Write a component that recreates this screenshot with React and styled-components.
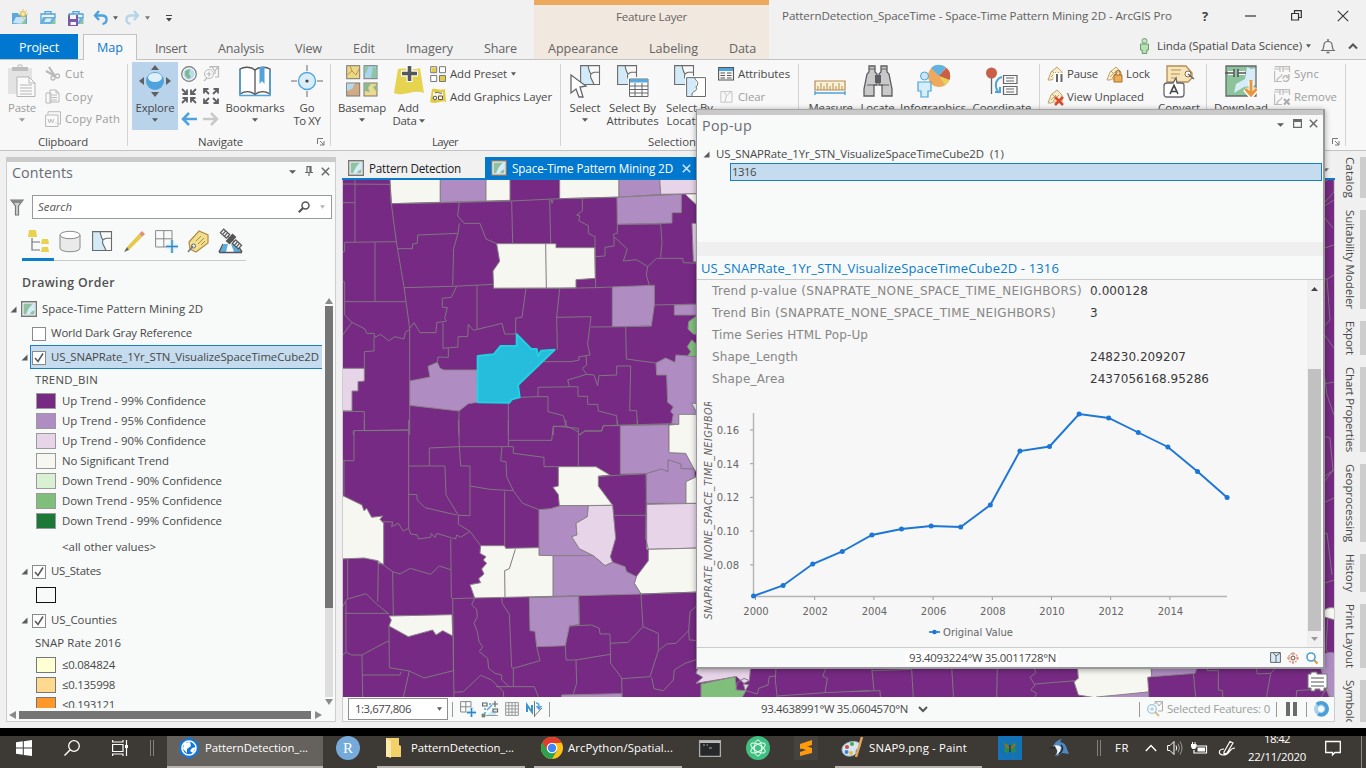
import React, { useLayoutEffect, useRef } from "react";
import styled, { createGlobalStyle, css } from "styled-components";

const UI = '"Open Sans", "Noto Sans", "Liberation Sans", sans-serif';
const WEB = '"DejaVu Sans", "Liberation Sans", sans-serif';

const Global = createGlobalStyle`
  * { box-sizing: border-box; }
  body { margin: 0; background: #f0f0f0; font: 11.4px/14px ${UI}; color: #484848; overflow: hidden; }
  svg { display: block; flex: none; overflow: visible; }
`;

/* ---------- text that is tracked to a given run length ---------- */
const Run = styled.span`
  display: block;
  flex: none;
  white-space: nowrap;
  width: max-content;
  ${(p) => p.$size && `font-size: ${p.$size}px;`}
  ${(p) => p.$color && `color: ${p.$color};`}
  ${(p) => p.$weight && `font-weight: ${p.$weight};`}
  ${(p) => p.$italic && "font-style: italic;"}
  ${(p) => p.$web && `font-family: ${WEB};`}
  margin-left: ${(p) => p.$ml || 0}px;
  ${(p) => p.$vertical && css`
    writing-mode: vertical-rl;
    width: auto;
    height: max-content;
  `}
`;

function Text({ w, ml, size, color, weight, italic, web, vertical, children }) {
  const ref = useRef(null);
  useLayoutEffect(() => {
    const el = ref.current;
    if (!w || !el) return;
    el.style.letterSpacing = "0px";
    const box = el.getBoundingClientRect();
    const natural = vertical ? box.height : box.width;
    el.style.letterSpacing = `${(w - natural) / el.textContent.length}px`;
  }, [w, vertical]);
  return (
    <Run ref={ref} $ml={ml} $size={size} $color={color} $weight={weight} $italic={italic} $web={web} $vertical={vertical}>
      {children}
    </Run>
  );
}

/* ---------- drawing helpers ---------- */
const Svg = styled.svg.attrs({ fill: "none" })`
  margin-left: ${(p) => p.$ml || 0}px;
  margin-top: ${(p) => p.$mt || 0}px;
`;
const I = ({ s = 16, w, h, ml, mt, children }) => (
  <Svg width={w || s} height={h || s} viewBox={`0 0 ${w || s} ${h || s}`} $ml={ml} $mt={mt}>
    {children}
  </Svg>
);
const G = "#6a6a6a";
const L = "#b9b9b9";
const B = "#4fa3dc";
const Caret = ({ ml, mt, color = "#5a5a5a", w = 6 }) => (
  <I w={w} h={4} ml={ml} mt={mt}><path d={`M0 .3H${w}L${w / 2} 3.7Z`} fill={color} /></I>
);
const Cross = ({ ml, mt, color = G, s = 9, sw = 1.5 }) => (
  <I s={s} ml={ml} mt={mt}><path d={`M.8.8L${s - 0.8} ${s - 0.8}M${s - 0.8}.8L.8 ${s - 0.8}`} stroke={color} strokeWidth={sw} /></I>
);

/* ---------- page frame ---------- */
const Screen = styled.div`
  position: relative;
  width: 1366px;
  height: 768px;
  overflow: hidden;
  display: flex;
  flex-direction: column;
  background: #f0f0f0;
`;
const Row = styled.div`
  display: flex;
  align-items: center;
  height: ${(p) => (p.$h ? `${p.$h}px` : "auto")};
  padding-left: ${(p) => p.$pl || 0}px;
  padding-bottom: ${(p) => p.$pb || 0}px;
  margin-top: ${(p) => p.$mt || 0}px;
  flex: none;
`;

/* ---------- header ---------- */
const Header = styled.header`
  display: flex;
  height: 60px;
  flex: none;
  background: #f1f1f1;
  border-bottom: 1px solid #c2c2c2;
`;
const HeaderPart = styled.div`
  width: ${(p) => p.$w}px;
  flex: none;
`;
const ContextPart = styled(HeaderPart)`
  background: #f1e8df;
  border-top: 5px solid #efa95c;
`;
const TabStrip = styled.nav`
  display: flex;
  align-items: center;
  height: 25px;
  > span { padding-top: 4px; }
`;
const ProjectTab = styled.div`
  width: 78px;
  height: 25px;
  padding: 7px 0 0 19px;
  background: #0078d0;
`;
const ActiveTab = styled.div`
  width: 54px;
  height: 26px;
  margin: 0 0 -1px 5px;
  padding: 6px 0 0 13px;
  background: #f8f8f8;
  border: 1px solid #c2c2c2;
  border-bottom: 0;
`;

const OpenFolder = () => (
  <>
    <path d="M5 4V1.700H11V4M1 14V4H15V8" stroke={B} strokeWidth="1.300" />
    <path d="M0 14L3 7H16L13 14Z" fill="#64b0e0" />
    <path d="M4 12L6 8.500H12L10 12Z" fill="#d9edf9" />
    <path d="M11 14L15.500 8V14Z" fill="#8cc6a0" />
  </>
);

function TopHeader() {
  const tabs = [["Insert", 18, 32], ["Analysis", 31, 46], ["View", 31, 27], ["Edit", 31, 22], ["Imagery", 31, 47], ["Share", 31, 33]];
  return (
    <Header>
      <HeaderPart $w={534}>
        <Row $h={34}>
          <I ml={12} mt={2}>
            <path d="M0 3H6L7 5H15V14H0Z" fill="#5ba9dd" />
            <path d="M1 13L4 7H14L12 14Z" fill="#c7e3f5" /><path d="M9 14L14 8V14Z" fill="#8cc6a0" />
            <circle cx="11" cy="4" r="2.500" fill="#f6e9a0" stroke="#d8b848" /><path d="M11-1V9M6 4H16M7.500.5L14.500 7.500M14.500.5L7.500 7.500" stroke="#d8b848" strokeDasharray="1.500 7" />
          </I>
          <I ml={12} mt={2}><OpenFolder /></I>
          <I ml={12} mt={2}>
            <OpenFolder /><path d="M0 5H10V16H0Z" fill="#7a5aa8" /><path d="M2 5H8V9H2Z" fill="#f4f4f4" /><path d="M2.500 12H8V15H2.500Z" fill="#f4f4f4" />
          </I>
          <I ml={9} mt={2}><path d="M6 1L2 5.500L6 10M2 5.500H9C15 5.500 15 13 9.500 14" stroke={B} strokeWidth="2.400" /></I>
          <Caret ml={4} w={5} mt={1} />
          <I ml={7} mt={2}><path d="M9 1L13 5.500L9 10M13 5.500H6C0 5.500 0 13 5.500 14" stroke="#b5d6ea" strokeWidth="2.400" /></I>
          <Caret ml={4} w={5} mt={1} color="#777" />
          <I w={6} h={7} ml={16} mt={2}><path d="M0 .5H6" stroke="#444" /><path d="M0 3H6L3 6.500Z" fill="#444" /></I>
        </Row>
        <TabStrip>
          <ProjectTab><Text w={40} size={12.6} color="#fff">Project</Text></ProjectTab>
          <ActiveTab><Text w={26} size={12.6} color="#0a78cc">Map</Text></ActiveTab>
          {tabs.map(([t, ml, w]) => <Text key={t} ml={ml} w={w} size={12.6} color="#646464">{t}</Text>)}
        </TabStrip>
      </HeaderPart>
      <ContextPart $w={235}>
        <Row $h={29} $pb={5}><Text ml={82} w={71} size={11.6} color="#6b6460">Feature Layer</Text></Row>
        <TabStrip>
          <Text ml={14} w={70} size={12.6} color="#646464">Appearance</Text>
          <Text ml={31} w={49} size={12.6} color="#646464">Labeling</Text>
          <Text ml={31} w={27} size={12.6} color="#646464">Data</Text>
        </TabStrip>
      </ContextPart>
      <HeaderPart $w={597}>
        <Row $h={31} $pl={13}>
          <Text w={390} size={11.6} color="#606060">PatternDetection_SpaceTime - Space-Time Pattern Mining 2D - ArcGIS Pro</Text>
          <Text ml={30} size={13} weight={700} color="#444">?</Text>
          <I w={11} h={2} ml={37}><path d="M0 1H11" stroke="#333" strokeWidth="1.200" /></I>
          <I s={11} ml={35}><path d="M.6 3.500H7.500V10H.6ZM3.500 3V.7H10.300V7.500H8" stroke="#333" strokeWidth="1.200" /></I>
          <Cross ml={35} s={12} color="#333" sw={1.1} />
        </Row>
        <Row $h={30} $pl={370}>
          <I w={11} h={16}><rect x="3" y=".7" width="5" height="4.500" rx="2" fill="#c9e6c6" stroke="#6a9c68" /><path d="M1.500 6H9.500V12H7.800V15.500H3.200V12H1.500Z" fill="#b8dfb5" stroke="#6a9c68" /></I>
          <Text ml={7} w={145} size={11.6}>Linda (Spatial Data Science)</Text>
          <Caret ml={4} w={5} />
          <I w={14} h={16} ml={10}><path d="M1 12.500C3 11 2.500 9 3 6.500C3.400 2.500 10.600 2.500 11 6.500C11.500 9 11 11 13 12.500Z" stroke="#6c6c6c" strokeWidth="1.200" /><path d="M7 3V1M5.500 14.500H8.500" stroke="#6c6c6c" strokeWidth="1.500" /></I>
          <I w={10} h={6} ml={13}><path d="M1 5.500L5 1.500L9 5.500" stroke="#555" strokeWidth="2" /></I>
        </Row>
      </HeaderPart>
    </Header>
  );
}

/* ---------- ribbon ---------- */
const Ribbon = styled.section`
  display: flex;
  height: 91px;
  flex: none;
  background: #f8f8f8;
  border-bottom: 1px solid #c2c2c2;
`;
const GroupBox = styled.div`
  position: relative;
  width: ${(p) => p.$w}px;
  flex: none;
  background: linear-gradient(#d4d4d4, #d4d4d4) right 4px / 1px 82px no-repeat;
`;
const GroupBody = styled.div`
  display: flex;
  align-items: flex-start;
  height: 74px;
`;
const GroupFoot = styled.div`
  display: flex;
  align-items: center;
  height: 15px;
`;
const BigBox = styled.button`
  display: flex;
  flex-direction: column;
  align-items: center;
  flex: none;
  width: ${(p) => p.$w}px;
  height: 68px;
  margin: 2px 0 0 ${(p) => p.$ml}px;
  padding: 3px 0 0;
  border: 0;
  color: ${(p) => (p.$dim ? "#9c9c9c" : "#484848")};
  font: 11.4px/13px ${UI};
  background: ${(p) => (p.$active ? "#b9d3ea" : "transparent")};
`;
const BigIcon = styled.span`
  height: 35px;
  margin-bottom: 1px;
`;
const SmallCol = styled.div`
  display: flex;
  flex-direction: column;
  flex: none;
  padding-top: ${(p) => (p.$pt === undefined ? 3 : p.$pt)}px;
  margin-left: ${(p) => p.$ml}px;
  width: ${(p) => p.$w}px;
`;
function Group({ w, body, label, lml, lw, launch }) {
  return (
    <GroupBox $w={w}>
      <GroupBody>{body}</GroupBody>
      <GroupFoot>
        {label && <Text ml={lml} w={lw}>{label}</Text>}
        {launch && <I s={8} ml={launch}><path d="M.5 6V.5H6M7 3V7H3M3 3L7 7" stroke="#777" /></I>}
      </GroupFoot>
    </GroupBox>
  );
}
function Big({ ml = 0, w, icon, a, aw, b, bw, arrow, active, dim }) {
  return (
    <BigBox $ml={ml} $w={w} $active={active} $dim={dim}>
      <BigIcon><I s={32}>{icon}</I></BigIcon>
      <Text w={aw}>{a}</Text>
      {b && (arrow ? <Row><Text w={bw}>{b}</Text><Caret ml={2} /></Row> : <Text w={bw}>{b}</Text>)}
      {!b && arrow && <Caret mt={4} color={dim ? "#9c9c9c" : undefined} />}
    </BigBox>
  );
}
const Small = ({ icon, t, w, arrow, dim }) => (
  <Row $h={22.5}>
    <I>{icon}</I>
    <Text ml={4} w={w} color={dim ? "#9c9c9c" : undefined}>{t}</Text>
    {arrow && <Caret ml={4} w={5} />}
  </Row>
);

const Counties = ({ c = G, f = "#d3eaf8" }) => (
  <>
    <path d="M.5.5H8C11 8 9 14 14 19.500H.5Z" fill={f} />
    <path d="M.6.6H19.500V19.500H.6ZM8 .5C9 5 9 7 11 9C9 12 12 14 14 19.500M19.500 7C14 7 14 7 11 9" stroke={c} strokeWidth="1.100" />
  </>
);
const MiniMap = ({ c = "#c4c4c4" }) => <path d="M1 .7H15V14H1ZM5 .7L8 6L14 1M8 6L6 14" stroke={c} strokeWidth="1.200" />;
const TagHouse = () => (
  <path d="M1 14L4 6L10 1L15 6V13H6L4 14ZM4 11L9 6M6 12L12 6M5 5L11 11" fill="#f8edc8" stroke="#b99a62" strokeWidth=".9" />
);

function RibbonBar() {
  return (
    <Ribbon>
      <Group w={128} label="Clipboard" lml={38} lw={50} body={<>
        <Big dim ml={4} w={36} a="Paste" aw={28} arrow icon={<>
          <path d="M2 3H26V29H2Z" fill="#e3e3e3" /><path d="M6 2H22V6H6Z" fill="#bdbdbd" /><path d="M12 2V0H16V2" stroke="#bdbdbd" />
          <path d="M11 12H23L29 18V31.500H11Z" fill="#fafafa" stroke="#b5b5b5" /><path d="M23 12V18H29M14 20H26M14 23H26M14 26H26M14 29H26" stroke="#b5b5b5" />
        </>} />
        <SmallCol $ml={5} $w={80}>
          <Small dim t="Cut" w={19} icon={<><path d="M4 1L10 10M1 5L10 10" stroke={L} strokeWidth="2.200" /><circle cx="8" cy="12" r="2" stroke={L} strokeWidth="1.300" /><circle cx="12.500" cy="10" r="2" stroke={L} strokeWidth="1.300" /></>} />
          <Small dim t="Copy" w={28} icon={<path d="M1 4H6V14H1ZM5 1H11L14 4V13H5ZM11 1V4H14M7 6H12M7 8.500H12M7 11H12" stroke={L} fill="#fafafa" />} />
          <Small dim t="Copy Path" w={55} icon={<><path d="M3 3V.7H15.500V13H13" stroke={L} /><path d="M.6 4H13V15.500H.6Z" fill="#fafafa" stroke={L} /><path d="M3 8L4.500 12L6 8L7.500 12L9 8M10.500 12H11.500" stroke={L} /></>} />
        </SmallCol>
      </>} />
      <Group w={203} label="Navigate" lml={70} lw={45} launch={74} body={<>
        <Big active ml={4} w={46} a="Explore" aw={39} arrow icon={<>
          <path d="M12 5L16 0L20 5ZM12 27L16 32L20 27ZM5 12L0 16L5 20ZM27 12L32 16L27 20Z" fill="#5f6064" />
          <circle cx="16" cy="16" r="9" fill="#4fa3dc" /><ellipse cx="16" cy="12.500" rx="7" ry="4.500" fill="#dff0fb" />
        </>} />
        <SmallCol $ml={3} $w={38} $pt={6}>
          <Row>
            <I s={16}><circle cx="8" cy="8" r="7.300" fill="#f3f8fb" stroke="#777" strokeWidth="1.200" /><circle cx="8" cy="8" r="5.500" fill="#b9dcef" /><path d="M4 5L9 3L8 8L10 11L7 13L4 9Z" fill="#7fb890" /></I>
            <I s={16} ml={6}><circle cx="6" cy="8" r="4.500" stroke={L} /><path d="M3.500 8H8.500M6 5.500V10.500M4 12L1 15M7 2V.6H15.500V11H12M9 1L12 5L15 1M12 5V8" stroke={L} strokeWidth="1.200" /></I>
          </Row>
          <Row $mt={6}>
            {["M1 1L6 6M6 1.500V6H1.500M15 1L10 6M10 1.500V6H14.500M1 15L6 10M1.500 10H6V14.500M15 15L10 10M14.500 10H10V14.500", "M1 1L6 6M1 5.500V1H5.500M15 1L10 6M10.500 1H15V5.500M1 15L6 10M1 10.500V15H5.500M15 15L10 10M15 10.500V15H10.500"].map((d, i) => (
              <I key={d} s={16} ml={i * 6}><path d={d} stroke="#5f6064" strokeWidth="1.800" /></I>
            ))}
          </Row>
          <Row $mt={7}>
            <I s={16}><path d="M16 8H2M8 2L2 8L8 14" stroke={B} strokeWidth="2.500" /></I>
            <I s={16} ml={6}><path d="M0 8H14M8 2L14 8L8 14" stroke="#c9c9c9" strokeWidth="2.500" /></I>
          </Row>
        </SmallCol>
        <Big ml={4} w={64} a="Bookmarks" aw={59} arrow icon={<>
          <path d="M1 29V4C5 1.500 12 1.500 16 5C20 1.500 27 1.500 31 4V29C26 26 20 26 16 29.500C12 26 6 26 1 29Z" fill="#fdfdfd" stroke="#55565a" strokeWidth="1.400" /><path d="M1 5V30.500H31V5" stroke={B} strokeWidth="1.500" />
          <path d="M16 5V29" stroke="#55565a" strokeWidth="1.300" /><path d="M20.500 2H25.500V19L23 16L20.500 19Z" fill={B} />
        </>} />
        <Big ml={2} w={36} a="Go" aw={15} b="To XY" bw={27} icon={<>
          <circle cx="16" cy="16" r="8.500" fill="#d9edfa" stroke={B} strokeWidth="1.300" /><path d="M16 6V0M16 32V26M6 16H0M32 16H26" stroke="#6a6a6a" /><circle cx="16" cy="16" r="1.600" fill="#444" />
        </>} />
      </>} />
      <Group w={230} label="Layer" lml={101} lw={26} body={<>
        <Big ml={3} w={56} a="Basemap" aw={48} arrow icon={<>
          <rect x=".7" y=".7" width="13" height="13" fill="#ead983" stroke="#777" /><path d="M1 10L6 6L10 10L13 4M4 1L6 6" stroke="#c98c50" /><rect x="18" y=".7" width="13" height="13" fill="#a9d5ee" stroke="#777" /><path d="M18.500 1H23L20 8L18.500 9ZM27 1L30.500 4V13H25Z" fill="#8fc7a5" />
          <rect x=".7" y="18" width="13" height="13" fill="#d1ab84" stroke="#777" /><path d="M1 18.500H9L6 24L1 26Z" fill="#b5d8ec" /><rect x="18" y="18" width="13" height="13" fill="#ecd98d" stroke="#777" /><path d="M18.500 18.500H25L22 23L24 27L19 26ZM27 22L30.500 20V27Z" fill="#82bd91" />
        </>} />
        <Big ml={2} w={33} a="Add" aw={21} b="Data" bw={24} arrow icon={<>
          <path d="M5 4C11 2 19 6 27 3L31 28C21 24 11 32 1 28Z" fill="#e6d34f" /><path d="M16.500 0V17M8 8.500H25" stroke="#fff" strokeWidth="6" /><path d="M16.500 1V16M9 8.500H24" stroke="#55565a" strokeWidth="3.600" />
        </>} />
        <SmallCol $ml={5} $w={124}>
          <Small t="Add Preset" w={57} arrow icon={<><path d="M.7.7H6.700V6.700H.7ZM9.500.7H15.500V6.700H9.500ZM.7 9.500H6.700V15.500H.7ZM9.500 9.500H15.500V15.500H9.500Z" fill="#fff" stroke="#777" /><path d="M1.500 1.500H6V6H1.500ZM10 10H15V15H10Z" fill="#e3cc45" /></>} />
          <Small t="Add Graphics Layer" w={102} icon={<g transform="translate(0 -1)"><path d="M2 1C6 0 10 3 15 1L16 14C10 12 6 17 0 14Z" fill="#e3cc45" /><path d="M3 4H13V12H3Z" fill="#fff" opacity=".8" /><path d="M5 5C8 3 9 6 12 5M8.500 8H12.500V11.500H8.500Z" stroke="#555" /><circle cx="5" cy="10" r="1.800" stroke="#555" /></g>} />
        </SmallCol>
      </>} />
      <Group w={238} label="Selection" lml={87} lw={48} body={<>
        <Big ml={4} w={40} a="Select" aw={31} arrow icon={<><g transform="translate(11)"><Counties /></g><path d="M2 10V28L7 24L10 32H14L11 22L17 21Z" fill="#fff" stroke="#66676b" strokeWidth="1.300" /></>} />
        <Big ml={0} w={55} a="Select By" aw={47} b="Attributes" bw={52} icon={<><Counties /><rect x="11" y="12" width="21" height="20" fill="#fff" /><path d="M12.500 14H31V31.500H12.500ZM12.500 21H31M12.500 24.500H31M12.500 28H31M18 18V31M25 18V31" stroke="#66676b" /><rect x="13" y="14" width="18" height="3.500" fill="#5ba9dd" /></>} />
        <Big ml={4} w={51} a="Select By" aw={47} b="Location" bw={46} icon={<><Counties /><g transform="translate(12 12)"><rect x="-1" y="-1" width="22" height="22" fill="#fff" /><path d="M.5.5H10V10C12 15 5 14 5 19.500H.5Z" fill="#d3eaf8" /><path d="M.6.6H19.500V19.500H.6ZM8 .5C10 4 14 5 10 10C13 15 5 13 6 19" stroke={G} /></g></>} />
        <SmallCol $ml={3} $w={78}>
          <Small t="Attributes" w={52} icon={<><path d="M.6 1.500H15.500V14H.6ZM2.500 7H7M2.500 9.500H7M2.500 12H7M9 7H13.500M9 9.500H13.500M9 12H13.500" stroke="#555" strokeWidth="1.100" /><path d="M1 2H15V5H1Z" fill={B} /></>} />
          <Small dim t="Clear" w={27} icon={<g transform="translate(2 2) scale(.8)"><MiniMap /></g>} />
        </SmallCol>
      </>} />
      <Group w={241} body={<>
        <Big ml={5} w={53} a="Measure" aw={44} icon={<><path d="M0 16H30V25H0Z" fill="#f9f0d5" stroke="#b78c55" strokeWidth="1.200" /><path d="M3 25V21M6 25V18M9 25V21M12 25V18M15 25V21M18 25V18M21 25V21M24 25V18M27 25V21" stroke="#b78c55" /><path d="M0 28H30M0 26V30M30 26V30" stroke={B} strokeWidth="1.400" /></>} />
        <Big w={41} a="Locate" aw={34} icon={<><path d="M7 1H13V7L15 9V20H12V31H2V24L5 9L7 7ZM19 1H25V7L27 9L30 24V31H20V20H17V9L19 7Z" fill="#c9c9c9" stroke="#5d5e62" strokeWidth="1.300" /><path d="M13 10H19V18H13Z" fill="#5d5e62" /><path d="M7 4H13M19 4H25M5 20H12M20 20H27" stroke="#5d5e62" /></>} />
        <Big w={70} a="Infographics" aw={66} icon={<><circle cx="22" cy="11" r="11" fill="#efa95c" /><path d="M22 11L14 3A11 11 0 0 1 29 2.500Z" fill="#62b3e4" /><path d="M22 11L29.500 3A11 11 0 0 1 32.500 15Z" fill="#c95f47" /><path d="M22 11L32.500 15A11 11 0 0 1 28 20Z" fill="#e7d156" /><circle cx="7.500" cy="11" r="4" fill="#c9e7f8" stroke="#4aa3da" /><path d="M1 17H14V26H11V32H4V26H1Z" fill="#d6edfa" stroke="#4aa3da" strokeWidth="1.200" /></>} />
        <Big w={68} a="Coordinate" aw={59} icon={<><circle cx="5.500" cy="8" r="5.500" fill="#c95f47" /><path d="M5.500 13V29" stroke="#666" strokeWidth="1.300" /><path d="M16 12C9 14 8 22 13 28M9 27H14V22" stroke={B} strokeWidth="2" /><path d="M17.500 10.500H31V18.500H17.500ZM17.500 21.500H31V29.500H17.500ZM20 13H28M20 16H28M20 24H28M20 27H28" stroke="#66676b" strokeWidth="1.200" /></>} />
      </>} />
      <Group w={167} body={<>
        <SmallCol $ml={7} $w={110}>
          <Row>
            <Small t="Pause" w={31} icon={<><TagHouse /><path d="M9 7V16M14 7V16" stroke="#fff" strokeWidth="5" /><path d="M10 8V16M14.500 8V16" stroke="#66676b" strokeWidth="2" /></>} />
            <Row $pl={8}><Small t="Lock" w={24} icon={<><TagHouse /><path d="M8 9H16V16H8Z" fill="#f0ad57" stroke="#a66f2d" /><path d="M10 9V6.500C10 4 14 4 14 6.500V9" stroke="#a66f2d" strokeWidth="1.300" /></>} /></Row>
          </Row>
          <Small t="View Unplaced" w={77} icon={<><TagHouse /><path d="M8 8L16 16M16 8L8 16" stroke="#d64a2f" strokeWidth="2.500" /></>} />
        </SmallCol>
        <Big w={44} a="Convert" aw={42} icon={<><path d="M4 1H23L29 8V13L25 17H4Z" fill="#f6e5b8" stroke="#b78c55" strokeWidth="1.300" /><path d="M8 5H18M8 9H17M8 13H14" stroke="#b78c55" /><circle cx="25" cy="9" r="3" fill="#fff" stroke="#8a6a40" /><path d="M25 9L31 14" stroke="#666" strokeWidth="1.500" /><path d="M4 18H10L13 13L14 18H18C21 18 21 19 21 21V29C21 31 20 32 18 32H4C2 32 1 31 1 29V21C1 19 2 18 4 18Z" fill="#fff" stroke="#66676b" strokeWidth="1.300" /><path d="M7 29L11 20.500L15 29M8.500 26.500H13.500" stroke="#444" strokeWidth="1.600" /></>} />
      </>} />
      <Group w={139} launch={125} body={<>
        <Big ml={4} w={60} a="Download" aw={54} icon={<><path d="M1 1H31V31H1Z" fill="#8cc39a" /><path d="M22 2L26 4L31 3V20L19 22L9 28L11 19L20 14Z" fill="#d6ecf9" /><path d="M1 1H31V31H1Z" stroke="#66676b" strokeWidth="1.300" /><path d="M3 8H10M13 8H20" stroke="#fff" strokeWidth="4" /><path d="M0 8H9M9 4V12M13 4V12M13 8H21" stroke="#55565a" strokeWidth="1.600" /><path d="M26 16V28M20 24L26 31L32 24" stroke="#fff" strokeWidth="5" /><path d="M26 15V29M20.500 24L26 30L31.500 24" stroke="#e9963d" strokeWidth="3" /></>} />
        <SmallCol $ml={3} $w={70}>
          {[["Sync", 25], ["Remove", 43]].map(([t, w], i) => (
            <Small dim key={t} t={t} w={w} icon={<><path d="M.6.6H15.500V6M.6 5V15.500H8M0 3H6M6 0V6M9 0V6M9 3H16M3 15C3 10 8 12 8 8" stroke="#bdbdbd" strokeWidth="1.200" />{i ? <path d="M10 10L15.500 15.500M15.500 10L10 15.500" stroke="#aaa" strokeWidth="2" /> : <path d="M9 13C9 9 14 9 14.500 11M15 12C15 16 10 16 9.500 14M15 8V11.500H12" stroke="#bbb" strokeWidth="1.300" />}</>} />
          ))}
        </SmallCol>
      </>} />
    </Ribbon>
  );
}

/* ---------- contents pane ---------- */
const Workspace = styled.main`
  display: flex;
  height: 577px;
  flex: none;
  padding: 6px 0 0 6px;
`;
const Pane = styled.aside`
  width: 330px;
  height: 565px;
  flex: none;
  border: 1px solid #cdcdcd;
  border-top: 5px solid #cacaca;
  background: #f7faf9;
`;
const SearchBox = styled.div`
  display: flex;
  align-items: center;
  width: 300px;
  height: 24px;
  margin-left: 8px;
  padding-left: 5px;
  border: 1px solid #999;
  background: #fff;
`;
const IconBar = styled.div`
  display: flex;
  align-items: center;
  width: 224px;
  height: 34px;
  margin: 8px 0 0 15px;
  background: linear-gradient(#0a7fcb, #0a7fcb) 0 100% / 32px 3px no-repeat, linear-gradient(#c9c9c9, #c9c9c9) 0 33px / 100% 1px no-repeat;
`;
const IconTab = styled.div`
  display: flex;
  justify-content: center;
  width: 32px;
  padding-bottom: 5px;
`;
const TreeWrap = styled.div`
  display: flex;
  height: 412px;
  margin-top: -4px;
`;
const Tree = styled.div`
  width: 315px;
  height: 411px;
  overflow: hidden;
`;
const TreeRow = styled.div`
  display: flex;
  align-items: center;
  height: ${(p) => p.$h || 24}px;
  padding-left: ${(p) => p.$pl || 0}px;
`;
const PickedLayer = styled.div`
  display: flex;
  align-items: center;
  width: 292px;
  height: 24px;
  margin-left: 2px;
  padding-left: 1px;
  border: 1px solid #1a80c4;
  border-right: 0;
  background: #c5dbee;
`;
const Check = styled.span`
  display: flex;
  align-items: center;
  justify-content: center;
  width: 14px;
  height: 14px;
  margin: 2px 5px 0 ${(p) => p.$ml || 0}px;
  border: 1px solid #8a8a8a;
  background: #fff;
`;
const Swatch = styled.span`
  width: 20px;
  height: 16px;
  margin: 0 6px 1px 0;
  border: 1px solid ${(p) => p.$edge || "#9a9a9a"};
  background: ${(p) => p.$fill};
`;
const VScroll = styled.div`
  display: flex;
  flex-direction: column;
  align-items: center;
  width: 12px;
  margin-left: 1px;
  padding-top: 1px;
`;
const VTrack = styled.div`
  width: 8px;
  height: 391px;
  margin: 2px 0;
  background: #dedede;
`;
const VThumb = styled.div`
  height: 302px;
  background: #757575;
`;
const HThumb = styled.div`
  width: 292px;
  height: 8px;
  margin: 0 4px 0 3px;
  background: #757575;
`;
const Tick = () => <I s={10}><path d="M1 5L4 8.500L9 .5" stroke="#5a5a5a" strokeWidth="1.600" /></I>;
const Expand = ({ ml }) => <I s={7} ml={ml}><path d="M6.500.5V6.500H.5Z" fill="#5a5a5a" /></I>;
const MapThumb = ({ ml }) => (
  <I s={16} ml={ml}><path d="M.7.7H15.300V15.300H.7Z" fill="#fff" stroke="#777" strokeWidth="1.400" /><path d="M2.500 2.500H13.500V13.500H2.500Z" fill="#8fc2a2" /><path d="M12 2.500H13.500V9L10 11L9 13.500H5L6 11L8 7Z" fill="#d6ecf9" /></I>
);

const TREND = [
  ["#762a83", "Up Trend - 99% Confidence", 144], ["#af8dc3", "Up Trend - 95% Confidence", 144], ["#e7d4e8", "Up Trend - 90% Confidence", 144],
  ["#f7f7f2", "No Significant Trend", 107], ["#d9f0d3", "Down Trend - 90% Confidence", 160], ["#7fbf7b", "Down Trend - 95% Confidence", 160], ["#1b7837", "Down Trend - 99% Confidence", 160],
];

function Contents() {
  const tools = [
    <><path d="M2 0H9L10 7H1ZM15 9H21L22 14H14ZM15 17H21L22 22H14Z" fill="#e8d24e" /><path d="M5 8V20H13M5 12H13" stroke="#777" strokeWidth="1.200" /></>,
    <><path d="M1 5V18C1 23 21 23 21 18V5" fill="#eaeaea" stroke="#8a8a8a" /><ellipse cx="11" cy="5" rx="10" ry="3.700" fill="#fff" stroke="#8a8a8a" /></>,
    <g transform="translate(1 1)"><Counties /></g>,
    <><path d="M4 17L16 4L19 7L6 20Z" fill="#e5c94a" /><path d="M4 17L1 22L6 20Z" fill="#666" /><path d="M16 4L19 1L22 4L19 7Z" fill="#e5907c" /></>,
    <><path d="M.6.6H17V17H.6ZM8.800.6V17M.6 8.800H17" stroke="#888" /><path d="M17 10V23M11 16.500H23" stroke="#cfe9f8" strokeWidth="4" /><path d="M17 10V23M11 16.500H23" stroke="#2f86bf" strokeWidth="1.400" /></>,
    <><path d="M2 12L12 1L21 5V13L9 22L3 19Z" fill="#efdf8e" stroke="#b58a45" strokeWidth="1.200" /><path d="M9 11L14 6M11 14L17 8M14 15L18 11" stroke="#b58a45" /><circle cx="6.500" cy="16" r="2" fill="#fff" stroke="#666" /><path d="M6 16L1 22" stroke="#777" strokeWidth="1.500" /></>,
    <><path d="M5 14L0 22H22L17 14Z" fill="#5badde" /><path d="M9 14L7 22H15L12 14Z" fill="#fff" /><path d="M0 22.500H23M0 22L4 14M23 22L19 16" stroke="#555" strokeWidth="1.400" /><g transform="rotate(42 12 9)" stroke="#555" strokeWidth="1.200" fill="#f2f2f2"><rect x="0" y="6.500" width="8" height="5" /><rect x="16" y="6.500" width="8" height="5" /><path d="M2.700 6.500V11.500M5.300 6.500V11.500M18.700 6.500V11.500M21.300 6.500V11.500M8 9H16" /><rect x="10" y="4.500" width="4" height="9" fill="#555" /></g></>,
  ];
  return (
    <Pane>
      <Row $h={22}>
        <Text ml={5} w={61} size={14.3} color="#6a6a74">Contents</Text>
        <Caret ml={216} mt={-2} w={7} />
        <I w={8} h={10} ml={9} mt={-4}><path d="M2 6V.6H6V6M0 6.500H8M4 7V10M5 1V6" stroke={G} strokeWidth="1.200" /></I>
        <Cross ml={8} mt={-4} />
      </Row>
      <Row $mt={11}>
        <I w={14} h={17} ml={3}><path d="M1 1H13L8.500 7V16H5.500V7Z" fill="#d3d3d3" stroke="#777" strokeWidth="1.200" /><path d="M1 1H13L11 4H3Z" fill="#888" /></I>
        <SearchBox>
          <Text w={34} italic color="#555">Search</Text>
          <I s={12} ml={226}><circle cx="7.500" cy="4.500" r="3.500" stroke="#555" strokeWidth="1.500" /><path d="M5 7L.8 11.200" stroke="#555" strokeWidth="2.200" /></I>
          <Caret ml={10} w={5} color="#b5b5b5" />
        </SearchBox>
      </Row>
      <IconBar>
        {tools.map((t, i) => <IconTab key={i}><I s={23}>{t}</I></IconTab>)}
      </IconBar>
      <Row $h={36} $pl={15} $mt={4}><Text w={93} size={12.3} weight={600} color="#505050">Drawing Order</Text></Row>
      <TreeWrap>
        <Tree>
          <TreeRow $pl={3}><Expand /><MapThumb ml={4} /><Text ml={5} w={161}>Space-Time Pattern Mining 2D</Text></TreeRow>
          <TreeRow $pl={25}><Check /><Text w={141}>World Dark Gray Reference</Text></TreeRow>
          <TreeRow $pl={14}><Expand /><PickedLayer><Check><Tick /></Check><Text w={268}>US_SNAPRate_1Yr_STN_VisualizeSpaceTimeCube2D</Text></PickedLayer></TreeRow>
          <TreeRow $pl={28} $h={22}><Text w={63}>TREND_BIN</Text></TreeRow>
          {TREND.map(([c, t, w]) => (
            <TreeRow key={t} $pl={29} $h={20}><Swatch $fill={c} /><Text w={w}>{t}</Text></TreeRow>
          ))}
          <TreeRow $pl={55} $h={31}><Text w={94}>&lt;all other values&gt;</Text></TreeRow>
          <TreeRow $pl={14} $h={18}><Expand /><Check $ml={4}><Tick /></Check><Text w={50}>US_States</Text></TreeRow>
          <TreeRow $pl={29} $h={30}><Swatch $fill="#f7faf9" $edge="#111" /></TreeRow>
          <TreeRow $pl={14} $h={20}><Expand /><Check $ml={4}><Tick /></Check><Text w={66}>US_Counties</Text></TreeRow>
          <TreeRow $pl={28} $h={25}><Text w={86}>SNAP Rate 2016</Text></TreeRow>
          {[["#ffffd4", "≤0.084824"], ["#fed98e", "≤0.135998"], ["#fe9929", "≤0.193121"]].map(([c, t]) => (
            <TreeRow key={t} $pl={29} $h={20}><Swatch $fill={c} $edge="#777" /><Text w={53}>{t}</Text></TreeRow>
          ))}
        </Tree>
        <VScroll>
          <I w={8} h={6}><path d="M4 0L8 6H0Z" fill="#8a8a8a" /></I>
          <VTrack><VThumb /></VTrack>
          <I w={8} h={6}><path d="M0 0H8L4 6Z" fill="#8a8a8a" /></I>
        </VScroll>
      </TreeWrap>
      <Row $pl={2} $h={11}>
        <I w={7} h={8}><path d="M7 0V8L0 4Z" fill="#8a8a8a" /></I><HThumb /><I w={7} h={8}><path d="M0 0V8L7 4Z" fill="#8a8a8a" /></I>
      </Row>
    </Pane>
  );
}

/* ---------- map pane ---------- */
const MapPane = styled.section`
  width: 993px;
  height: 565px;
  margin-left: 6px;
  flex: none;
  border: 1px solid #cdcdcd;
  border-top: 0;
`;
const MapTabs = styled.div`
  display: flex;
  height: 23px;
  margin: 0 -1px 0 -1px;
  background: #f1f1f1;
  border-bottom: 2px solid #0a7acb;
`;
const MapTab = styled.div`
  display: flex;
  align-items: center;
  width: ${(p) => p.$w}px;
  padding: 1px 0 0 6px;
  background: ${(p) => (p.$active ? "#0078d0" : "transparent")};
`;
const Canvas = styled.div`
  height: 517px;
  overflow: hidden;
  background: #762a83;
`;
const StatusBar = styled.footer`
  display: flex;
  align-items: center;
  height: 24px;
  background: #f7faf9;
`;
const ScaleBox = styled.div`
  display: flex;
  align-items: center;
  width: 100px;
  height: 22px;
  margin-left: 5px;
  padding-left: 6px;
  border: 1px solid #8f8f8f;
  background: #fff;
`;
const Sep = styled.span`
  width: 1px;
  height: 15px;
  margin-left: ${(p) => p.$ml || 0}px;
  background: #9a9a9a;
`;

const P = "#af8dc3", K = "#e7d4e8", W = "#f7f7f2", V = "#7fbf7b";
const NORTH_AREAS = [
  [W, "150,70 301,70 301,142 154,146"], [P, "301,70 438,70 438,138 301,142"], [W, "438,70 510,70 510,136 438,138"],
  [W, "659,70 837,70 837,126 659,131"], [P, "837,70 959,70 962,118 837,126"], [K, "959,70 1080,70 1080,116 962,118"],
  [P, "831,127 1024,118 1024,173 996,173 996,204 832,208"], [W, "1035,117 1080,116 1080,160"], [K, "1056,205 1080,205 1080,322 1060,320"],
  [W, "470,266 648,266 648,278 765,278 766,370 708,374 708,399 461,400 459,348 479,319"],
  [P, "817,396 943,391 943,450 934,513 817,515"], [P, "1003,450 1080,448 1080,480 1003,480"],
  [V, "1080,475 1046,500 1044,522 1060,537 1080,540"], [V, "1080,575 1055,555 1042,575 1052,590 1040,608 1080,610"],
  [P, "948,624 977,609 1005,622 1008,600 1080,606 1080,778 1016,778 1016,808 995,806 1000,778 992,770 1000,755 983,742 980,660 950,660"],
  [W, "1055,745 1080,745 1080,770 1066,765"],
  [P, "209,678 270,666 264,634 292,622 300,640 312,645 412,645 413,742 385,746 357,768 209,751"],
  [K, "0,640 73,640 73,678 54,680 54,708 36,708 36,768 0,768"],
];
const NORTH_LINES = [
  "45,70 45,262", "0,87 150,88", "0,143 45,143", "150,88 154,146 169,260 192,395 209,520 209,840", "0,292 14,290 14,262 169,260", "105,262 105,438", "14,380 14,480 36,502 75,522 80,535 102,535 105,547 122,538 146,557 165,545 192,552 196,532 209,523",
  "0,382 14,380", "14,440 197,440", "36,502 8,540", "102,545 102,588 73,590 73,640", "0,768 73,770 73,827 209,825", "40,840 40,827", "154,146 358,142 515,138 659,131", "358,142 353,182 372,205 420,205 438,252 470,266", "358,205 354,235 233,240 232,265 218,267 217,281 172,281", "354,235 341,280 338,390",
  "192,398 338,394 461,388", "350,394 334,427 307,430 307,457 322,458 314,490 320,498 290,503 288,533 240,533 222,503 209,520", "309,503 309,580 354,576 354,545 383,545 385,508 400,526 486,505 494,537 530,537", "411,390 411,524", "325,580 325,607 294,606 292,622",
  "515,138 518,264", "629,134 632,264", "634,134 636,145 640,134", "659,131 831,127", "727,130 727,168 710,180 720,183 716,197 745,212 745,235 765,245 765,305 795,303 795,277 822,273 822,245 819,238 832,235 832,208", "822,245 862,282 850,318 890,314 923,335 950,310 1028,310 1030,323 1080,325", "832,208 962,207 966,262 962,308", "923,335 919,360 928,391 943,391", "765,305 767,398 817,396", "943,450 1080,447", "617,266 619,399",
  "461,400 659,400 767,398", "558,400 546,487 527,489 527,537", "659,400 650,487 652,584", "650,487 753,485 743,567 750,600 715,606 718,615 693,620 610,620", "753,516 857,515 934,513", "857,515 859,612 948,624", "738,603 740,630 727,640 740,658 683,675 688,693", "740,658 762,660 773,692 777,662 830,660 830,633 872,633 869,767 890,767 892,808", "539,727 594,725 594,697 714,695 714,724 743,724 743,748 773,748 775,768 830,782 832,808", "594,725 624,725 624,770 670,782 678,813", "505,743 505,840", "357,768 357,840", "640,840 640,815 680,813 714,830", "720,840 734,828 785,828 790,812 995,806",
];
const SOUTH_AREAS = [
  [P, "841,17 985,14 987,98 1037,100 1062,147 1065,172 1038,185 1038,250 920,250 918,161 841,162"], [W, "987,15 1016,13 1016,-20 1080,-20 1080,170 1062,147 1037,100 987,98"], [W, "1038,185 1080,165 1080,250 1038,250"],
  [K, "920,253 1080,250 1080,384 920,388"], [W, "925,388 1080,384 1080,516 903,522 883,490 889,470 925,422"],
  [W, "655,140 768,140 810,165 775,169 775,198 818,256 658,257 655,224 639,202 655,198"], [P, "597,269 632,266 662,257 745,257 742,290 708,310 711,345 695,350 718,386 760,407 597,406"],
  [K, "745,257 818,256 827,355 811,410 818,427 795,437 760,407 718,386 695,350 711,345 708,310 742,290"], [P, "639,407 760,407 795,437 818,427 855,440 860,455 889,470 883,490 903,522 639,529"],
  [W, "422,377 494,377 497,385 597,383 597,406 639,407 639,529 404,534 390,494 422,488 416,476 432,462 425,447 440,430 430,420 438,410 420,400"],
  [W, "0,223 66,255 72,272 80,265 95,292 128,288 120,298 131,310 131,433 115,430 113,422 72,414 0,417"], [W, "147,588 336,584 338,648 308,632 288,645 278,630 205,650 147,618 154,600"],
  [P, "568,533 716,529 718,613 688,618 676,677 590,680 585,634 570,632"], [P, "665,825 846,821 846,840 665,840"],
];
const SOUTH_LINES = [
  "73,0 73,30", "206,0 206,325", "0,122 42,122 42,32 206,30", "12,122 12,227", "355,0 358,80 362,138 390,138 390,287 355,286 318,225 315,138 206,138", "268,136 268,84 358,80 520,80 520,100 612,112 612,140 655,140", "505,0 505,80", "505,61 635,61 640,18 715,25 715,140", "678,0 678,18", "715,45 735,33 785,33 790,17 841,17", "486,80 482,123 498,125 500,170 520,212 548,250 597,269", "390,198 450,208 520,212", "494,214 494,377", "206,223 230,224 232,240 255,263 350,285", "355,286 355,313 390,334 422,377", "128,305 158,306 155,320 175,310 190,333 206,325 212,342 232,345 235,357 272,352 274,340 285,353 290,340 347,357 350,345 362,352 390,334", "332,357 334,534 338,536 404,534", "113,422 158,455 180,462 211,445 272,463 298,438 332,449", "158,455 160,588", "115,430 113,545", "23,417 23,535", "8,560 20,538 78,521 113,555 147,582", "15,580 147,580", "18,545 18,697 35,705 66,705 140,665 147,665", "147,618 148,743 208,753 252,774 340,752 340,650", "8,705 18,697", "66,705 68,840", "66,765 180,765 184,755", "208,753 188,840", "338,536 342,840", "342,817 370,815 422,766 455,780 490,815 492,840",
  "404,534 395,555 410,568 412,590 402,610 412,635 417,665 428,680 418,695 443,715 446,745 465,760 485,765 485,780 508,800", "468,800 583,800 595,830", "485,532 487,550 508,583 515,742 520,745 520,800", "520,745 600,722 590,680", "676,677 678,720 708,720 810,703", "708,720 710,790 700,822", "688,618 755,615 778,625 780,642 810,642 812,730 845,774 846,825", "718,613 716,529", "903,522 1080,516", "903,522 909,620 955,640 955,692 930,770 845,776", "812,670 865,667 909,620", "955,692 980,672 1008,670 1046,632 1050,575 1080,550", "1046,632 1048,660 1080,662", "1080,715 1035,730 1003,750 1000,780 970,812 942,806 935,772", "526,388 508,446 494,452 495,532", "920,161 918,286 820,286", "918,286 917,355 925,388", "775,169 918,161", "892,0 892,15", "832,0 832,17", "918,161 965,147 984,155 984,119 1023,132 1023,146 1062,147",
];
const EDGE_LINES = [
  "976,4 991,-3 991,12 975,30 990,48", "975,30 991,20", "975,70 991,65", "975,100 984,99 987,140 978,150 991,168", "984,99 991,95", "978,170 984,215 991,235", "975,205 991,202", "976,255 987,258 990,290 978,306", "976,300 991,290", "976,325 991,318", "978,355 984,353 989,395", "976,405 991,400", "975,440 985,435 983,470 991,480", "976,520 991,498",
];
const Shape = ({ areas = [], lines = [] }) => (
  <>
    {areas.map(([f, p]) => <polygon key={p} points={p} fill={f} stroke="#8a8388" strokeWidth="3" strokeLinejoin="round" />)}
    {lines.map((p) => <polyline key={p} points={p} fill="none" stroke="#807680" strokeWidth="3" />)}
  </>
);
const EdgeShapes = () => (
  <>
    {EDGE_LINES.map((p) => <polyline key={p} points={p} fill="none" stroke="#807680" />)}
    <path d="M978 433Q984 426 992 428V440L978 436Z" fill={W} stroke="#8a8388" />
    <path d="M978 475Q986 471 992 473V517H988L978 490Z" fill={P} stroke="#8a8388" strokeWidth=".5" />
  </>
);
function CountyMap() {
  return (
    <Svg width="992" height="517" viewBox="0 0 992 517">
      <g transform="translate(-3 240) scale(.33333)"><Shape areas={SOUTH_AREAS} lines={SOUTH_LINES} /></g>
      <g transform="translate(-3 -25) scale(.33333)">
        <Shape areas={NORTH_AREAS} lines={NORTH_LINES} />
        <polygon points="413,603 461,598 482,573 530,573 530,538 573,581 590,582 595,604 603,587 644,584 534,690 539,727 516,733 508,743 413,742" fill="#26bcdb" stroke="#1fd2e2" strokeWidth="6" strokeLinejoin="round" />
      </g>
      <g transform="translate(-3 480) scale(.33333)">
        <Shape
          areas={[[K, "1075,20 1232,20 1228,62 1212,70 1190,50 1068,70 1088,52 1068,40"], [V, "1083,72 1185,50 1190,90 1218,92 1205,115 1083,115"], [K, "1210,72 1226,74 1216,92"]]}
          lines={["1228,62 1212,55 1192,68 1188,90", "1218,92 1252,102 1256,85 1284,75 1288,50 1308,48", "1308,20 1306,60 1312,115", "1312,108 1455,98 1590,92", "1460,20 1448,48 1462,55 1455,98"]}
        />
      </g>
      <g transform="translate(507 450) scale(.33333)">
        <Shape
          areas={[[W, "682,110 903,110 905,140 893,142 896,186 745,205 685,195 672,155 685,145"], [P, "905,110 1042,110 1035,130 905,140"], [P, "740,201 896,186 896,210 730,210"], [P, "1420,75 1445,75 1460,90 1460,210 1440,205 1430,180 1420,150"]]}
          lines={["0,185 90,182 92,210", "65,110 72,183", "65,122 185,118 190,205", "305,110 311,210", "442,110 440,210", "552,115 558,128 540,142 555,165 542,180 560,190 550,210", "555,162 678,152", "1030,130 1038,210", "1072,110 1072,122 1105,122 1105,180 1118,182 1118,205", "1218,110 1222,132 1262,130 1248,210", "1262,130 1280,110", "1338,210 1340,182 1430,175", "1420,150 1460,145"]}
        />
      </g>
      <EdgeShapes />
      <path d="M965 508V494H968V492H974V494H984V508H981V511H977V509H972V511H968V508Z" fill="#fff" stroke="#777" /><path d="M968 498H981M968 502H981M968 506H981" stroke="#555" />
    </Svg>
  );
}

function MapArea() {
  return (
    <MapPane>
      <MapTabs>
        <MapTab $w={143}><MapThumb /><Text ml={5} w={92} color="#222" size={11.7}>Pattern Detection</Text></MapTab>
        <MapTab $w={213} $active><MapThumb /><Text ml={5} w={161} color="#fff" size={11.7}>Space-Time Pattern Mining 2D</Text><Cross ml={9} s={9} color="#cfe6f7" /></MapTab>
        <Row $pl={625}><Caret w={6} color="#777" mt={4} /></Row>
      </MapTabs>
      <Canvas><CountyMap /></Canvas>
      <StatusBar>
        <ScaleBox><Text w={56}>1:3,677,806</Text><Caret ml={26} w={5} /></ScaleBox>
        <Sep $ml={4} />
        <I ml={7}><path d="M.6.6H11V11H.6ZM5.800.6V11M.6 5.800H11" stroke="#888" /><path d="M11.500 6V16M6.500 11.500H16" stroke="#c6e3f4" strokeWidth="3.500" /><path d="M11.500 7V16M7 11.500H16" stroke="#2f86bf" strokeWidth="1.300" /></I>
        <I ml={6}><path d="M4 15L14 6V15Z" fill="#cde8f6" /><path d="M.6 2H5V5H.6ZM11 8H15.500V11H11ZM10 3H16M13 0V6" stroke="#666" strokeWidth="1.200" /><path d="M5 9L10 4M2 12H4M7 3H9M3 7V9" stroke={B} strokeWidth="1.400" /><path d="M0 13H3V16H0ZM4 14.500H16" fill="#5c9e60" stroke="#777" strokeWidth=".7" /></I>
        <I s={14} ml={7}><path d="M.6.6H13.400V13.400H.6ZM3.800.6V13.400M7 .6V13.400M10.200.6V13.400M.6 3.800H13.400M.6 7H13.400M.6 10.200H13.400" stroke="#999" /></I>
        <I ml={7}><path d="M1 11V4L6 11V4" stroke="#3b94cf" strokeWidth="2" /><path d="M8.500 0V16M8.500 15L16 7" stroke="#777" /><path d="M10 2C13 2 13 4 13 7M10.500 5L13 8L15.500 5" stroke={B} strokeWidth="1.500" /></I>
        <Sep $ml={7} />
        <Text ml={211} w={147}>93.4638991°W 35.0604570°N</Text>
        <I w={10} h={7} ml={10}><path d="M1 1L5 5L9 1" stroke="#555" strokeWidth="2" /></I>
        <Sep $ml={211} />
        <I ml={7}><circle cx="5" cy="8" r="4.300" stroke="#9cc8e4" strokeWidth="1.300" /><path d="M3 8H7M5 6V10" stroke="#9cc8e4" /><path d="M8 11L12 15" stroke="#d9b98a" strokeWidth="2" /><path d="M8 3V.6H15.500V10H11M9 1L12 5L15 1" stroke="#aaa" /></I>
        <Text ml={4} w={103} color="#9c9c9c">Selected Features: 0</Text>
        <Sep $ml={6} />
        <I w={11} h={14} ml={9}><path d="M0 0H4V14H0ZM7 0H11V14H7Z" fill="#6b6b6b" /></I>
        <Sep $ml={9} />
        <I s={14} ml={7}><circle cx="7" cy="7" r="5" stroke="#a9d1ec" strokeWidth="4" /><path d="M3 2.500A6 6 0 1 1 4 12" stroke="#4a9fd8" strokeWidth="3.800" /></I>
      </StatusBar>
    </MapPane>
  );
}

/* ---------- right dock ---------- */
const Dock = styled.aside`
  display: flex;
  flex-direction: column;
  gap: 12px;
  width: 31px;
  height: 566px;
  overflow: hidden;
`;
const DockTab = styled.div`
  display: flex;
  justify-content: flex-end;
  flex: none;
  height: ${(p) => p.$h}px;
  padding-right: 3px;
  overflow: hidden;
  border-right: 6px solid #cdcdcd;
`;
const DOCK = [["Catalog", 41], ["Suitability Modeler", 99], ["Export", 34], ["Chart Properties", 85], ["Geoprocessing", 78], ["History", 38], ["Print Layout", 64], ["Symbology", 42, 57]];

/* ---------- pop-up window ---------- */
const PopupWin = styled.div`
  position: absolute;
  left: 696px;
  top: 109px;
  width: 629px;
  height: 560px;
  border: 1px solid #989898;
  border-top-color: #a5a5a5;
  border-right-width: 2px;
  border-bottom-width: 2px;
  background: #f7faf9;
  box-shadow: 0 1px 6px rgba(0, 0, 0, 0.35);
`;
const Grip = styled.div`
  height: 5px;
  background: #c9c9c9;
`;
const PickedFeature = styled.div`
  width: 592px;
  height: 18px;
  margin: 0 0 0 33px;
  padding: 1px 0 0 1px;
  border: 1px solid #1a80c4;
  background: #c5dbee;
`;
const Splitter = styled.div`
  height: 14px;
  margin-top: 61px;
  background: #efefef;
`;
const PopTitle = styled.div`
  display: flex;
  align-items: center;
  height: 24px;
  padding: 0 0 0 4px;
  border-bottom: 1px solid #cbcbcb;
`;
const PopBody = styled.div`
  display: flex;
  height: 367px;
  background: #f7f7f7;
`;
const PopMain = styled.div`
  width: 610px;
  height: 367px;
  overflow: hidden;
`;
const Field = styled.div`
  display: grid;
  grid-template-columns: 378px 1fr;
  align-items: center;
  height: 22px;
  padding-left: 15px;
  font: 12px/16px ${WEB};
`;
const PopScroll = styled.div`
  display: flex;
  flex-direction: column;
  align-items: center;
  width: 14px;
  padding-top: 7px;
  background: #f0f0f0;
`;
const PopThumb = styled.div`
  width: 13px;
  height: 262px;
  margin-top: 78px;
  background: #c1c1c1;
`;
const PopFoot = styled.div`
  display: flex;
  align-items: center;
  height: 20px;
  border-top: 1px solid #cbcbcb;
`;
const Coord = styled.div`
  width: 153px;
  margin-left: 208px;
  padding-left: 4px;
  background: #fff;
`;

const SERIES = [596, 585.5, 564, 551.5, 535, 529, 526, 527, 505, 451, 446.5, 414, 418, 432.5, 447, 471.5, 497.5];
function TrendChart() {
  const pt = SERIES.map((y, i) => [753.5 + 29.6 * i, y]);
  return (
    <Svg width="610" height="257" viewBox="697 390 610 257">
      <defs><clipPath id="axisTitle"><rect x="697" y="402" width="30" height="240" /></clipPath></defs>
      <path d="M753.500 413V596.500H1227" stroke="#b3b3b3" strokeWidth="1.400" />
      {[0, 1, 2, 3, 4, 5, 6, 7].map((i) => (
        <g key={i}>
          <path d={`M${755.5 + 59.2 * i} 597V600`} stroke="#999" />
          <text x={756 + 59.2 * i} y="615" fontFamily={WEB} fontSize="10" textAnchor="middle" fill="#666">{2000 + 2 * i}</text>
        </g>
      ))}
      {["0.16", "0.14", "0.12", "0.10", "0.08"].map((t, i) => (
        <g key={t}>
          <path d={`M750 ${430 + 33.7 * i}H753`} stroke="#999" />
          <text x="739" y={434 + 33.7 * i} fontFamily={WEB} fontSize="10" textAnchor="end" fill="#666">{t}</text>
        </g>
      ))}
      <g clipPath="url(#axisTitle)">
        <text transform="translate(712 619.500) rotate(-90)" fontFamily={WEB} fontSize="9.600" fontStyle="italic" fill="#666" textLength="226">SNAPRATE_NONE_SPACE_TIME_NEIGHBORS</text>
      </g>
      <polyline points={pt.map((p) => p.join()).join(" ")} stroke="#1b76d6" strokeWidth="1.900" />
      {pt.map(([x, y]) => <circle key={x} cx={x} cy={y} r="2.500" fill="#1b76d6" />)}
      <path d="M929 632H940" stroke="#1b76d6" strokeWidth="1.600" /><circle cx="934.500" cy="632" r="2.300" fill="#1b76d6" />
      <text x="943" y="635.500" fontFamily={WEB} fontSize="10" fill="#666" textLength="70">Original Value</text>
    </Svg>
  );
}
function Popup() {
  const fields = [
    ["Trend p-value (SNAPRATE_NONE_SPACE_TIME_NEIGHBORS)", 370, "0.000128", 58],
    ["Trend Bin (SNAPRATE_NONE_SPACE_TIME_NEIGHBORS)", 344, "3", 8],
    ["Time Series HTML Pop-Up", 156, "", 0],
    ["Shape_Length", 86, "248230.209207", 96],
    ["Shape_Area", 73, "2437056168.95286", 119],
  ];
  return (
    <PopupWin>
      <Grip />
      <Row $h={22} $pl={5}>
        <Text w={50} size={14.3} color="#6a6a74">Pop-up</Text>
        <Caret ml={525} w={7} mt={-2} />
        <I w={9} h={9} ml={9} mt={-6}><path d="M.6 1H8.400V8.400H.6Z" stroke={G} strokeWidth="1.200" /><path d="M0 0H9V3H0Z" fill={G} /></I>
        <Cross ml={7} mt={-5} />
      </Row>
      <Row $h={18} $mt={8} $pl={6}><Expand /><Text ml={6} w={268}>US_SNAPRate_1Yr_STN_VisualizeSpaceTimeCube2D</Text><Text ml={6} w={14}>(1)</Text></Row>
      <PickedFeature><Text w={24}>1316</Text></PickedFeature>
      <Splitter />
      <PopTitle><Text w={358} size={13} color="#0a7acb">US_SNAPRate_1Yr_STN_VisualizeSpaceTimeCube2D - 1316</Text></PopTitle>
      <PopBody>
        <PopMain>
          {fields.map(([k, kw, v, vw]) => (
            <Field key={k}><Text web w={kw} color="#868686">{k}</Text>{v && <Text web w={vw} color="#3a3a3a">{v}</Text>}</Field>
          ))}
          <TrendChart />
        </PopMain>
        <PopScroll>
          <I w={7} h={4}><path d="M3.500 0L7 4H0Z" fill="#444" /></I>
          <PopThumb />
          <I w={7} h={4} mt={6}><path d="M0 0H7L3.500 4Z" fill="#999" /></I>
        </PopScroll>
      </PopBody>
      <PopFoot>
        <Coord><Text w={147}>93.4093224°W 35.0011728°N</Text></Coord>
        <I s={11} ml={212}><path d="M.6.6H10.400V10.400H.6Z" fill="#d6ecf9" stroke="#666" /><path d="M3 .6L6 4L10 1M6 4V10" stroke="#666" /></I>
        <I s={12} ml={6}><circle cx="6" cy="6" r="4.500" stroke="#e3a08c" strokeWidth="1.500" strokeDasharray="2 1" /><circle cx="6" cy="6" r="2" stroke="#7a4a40" /><path d="M6 0V3M6 9V12M0 6H3M9 6H12" stroke="#d9806a" /></I>
        <I s={12} ml={7}><path d="M8 8L11.500 11.500" stroke="#d0a24c" strokeWidth="2.400" /><circle cx="5" cy="5" r="4" stroke="#4a9fd8" strokeWidth="1.600" fill="#fff" /></I>
      </PopFoot>
    </PopupWin>
  );
}

/* ---------- taskbar ---------- */
const Taskbar = styled.footer`
  display: flex;
  height: 40px;
  flex: none;
  border-top: 8px solid #000;
  background: #3d3934;
  overflow: hidden;
`;
const Task = styled.div`
  display: flex;
  align-items: center;
  flex: none;
  width: ${(p) => p.$w}px;
  height: 32px;
  margin-left: ${(p) => p.$ml || 0}px;
  padding: ${(p) => (p.$open ? "2px" : "0")} 0 8px ${(p) => p.$pl || 0}px;
  ${(p) => p.$active && "background: #65615d;"}
  ${(p) => p.$open && "border-bottom: 2px solid #b8b4b0;"}
`;
const Clock = styled.div`
  display: flex;
  flex-direction: column;
  align-items: center;
  width: 60px;
  gap: 4px;
  margin: -4px 0 0 13px;
`;
function WinBar() {
  const handle = <path d="M.5 0V16M3.500 0V16" stroke="#85817d" />;
  return (
    <Taskbar>
      <Task $w={150} $pl={16}>
        <I><path d="M0 2.300L6.800 1.300V7.600H0ZM7.800 1.200L16 0V7.600H7.800ZM0 8.500H6.800V14.800L0 13.800ZM7.800 8.500H16V16L7.800 14.900Z" fill="#fff" /></I>
        <I ml={32}><circle cx="10" cy="6" r="5.300" stroke="#fff" strokeWidth="1.300" /><path d="M6 10L.5 15.500" stroke="#fff" strokeWidth="1.500" /></I>
        <I ml={32}><path d="M.6 4.500H11V11.500H.6ZM.6 0V2H11V0M.6 16V14H11V16M14.500 0V16" stroke="#fff" strokeWidth="1.200" /><path d="M13 5H16V8H13Z" fill="#fff" /></I>
      </Task>
      <Task $w={17}><I w={4}>{handle}</I></Task>
      <Task $w={156} $active $open $pl={11}>
        <I s={22}><path d="M11 0L20.500 5.500V16.500L11 22L1.500 16.500V5.500Z" fill="#1277dd" /><circle cx="11" cy="11" r="7" fill="#1277dd" stroke="#fff" strokeWidth="1.600" /><path d="M6 6L12 5L13 9L9 12V16L5 12ZM14 11L18 10L15 16L12 14Z" fill="#fff" /></I>
        <Text ml={5} w={103} color="#fff">PatternDetection_...</Text>
      </Task>
      <Task $ml={13} $w={41}><I s={24}><circle cx="12" cy="12" r="12" fill="#75aadb" /><text x="12" y="17" textAnchor="middle" fontFamily="Liberation Serif, serif" fontSize="15" fill="#fff">R</text></I></Task>
      <Task $w={148} $open $pl={9}>
        <I w={15} h={20}><path d="M0 0H13V7L15 8V19H0Z" fill="#f3d069" /><path d="M0 0L5 3V20L0 18Z" fill="#fdeaa8" /></I>
        <Text ml={10} w={103} color="#fff">PatternDetection_...</Text>
      </Task>
      <Task $ml={9} $w={148} $open $pl={7}>
        <I s={22}><circle cx="11" cy="11" r="11" fill="#fbc116" /><path d="M11 11L1.500 5.500A11 11 0 0 0 11 22L16 13.500Z" fill="#2ba24c" /><path d="M11 6H20.800A11 11 0 0 0 1.500 5.500L6 13L11 11Z" fill="#e33b2e" /><circle cx="11" cy="11" r="5.300" fill="#fff" /><circle cx="11" cy="11" r="4.200" fill="#4285f4" /></I>
        <Text ml={5} w={105} color="#fff">ArcPython/Spatial...</Text>
      </Task>
      <Task $w={153} $ml={17}>
        <I w={22} h={17}><path d="M.6.6H21.400V16.400H.6Z" fill="#26282a" stroke="#aaa" strokeWidth="1.300" /><path d="M1 1H21V3H1Z" fill="#bbb" /><path d="M4 5H6M7.500 5H9M10 8H13" stroke="#aaa" /></I>
        <I s={24} ml={25}><circle cx="12" cy="12" r="12" fill="#3fbf80" /><g stroke="#e9fff3" strokeWidth="1"><ellipse cx="12" cy="12" rx="3.500" ry="8" /><ellipse cx="12" cy="12" rx="3.500" ry="8" transform="rotate(60 12 12)" /><ellipse cx="12" cy="12" rx="3.500" ry="8" transform="rotate(120 12 12)" /></g></I>
        <I s={24} ml={24}><path d="M0 0H24V24H0Z" fill="#45433f" /><path d="M6 8L18 4V9L6 13ZM6 8L18 12V16L6 12ZM6 16L18 12V17L6 20Z" fill="#ff9a0c" /></I>
      </Task>
      <Task $w={147} $ml={-17} $open $pl={6}>
        <I s={22}><path d="M1 12C2 4 18 2 19 8C20 12 14 11 15 15C15 20 1 22 1 12Z" fill="#d6e7f3" stroke="#9bb8cc" /><circle cx="6" cy="10" r="2" fill="#d8483b" /><circle cx="11" cy="7" r="2" fill="#4aa84a" /><circle cx="5.500" cy="15" r="2" fill="#3a7fd5" /><circle cx="10" cy="16" r="2" fill="#e8c13a" /><path d="M21 0L15 20" stroke="#e5a45b" strokeWidth="2.500" /></I>
        <Text ml={6} w={98} color="#fff">SNAP9.png - Paint</Text>
      </Task>
      <Task $w={115} $ml={16}>
        <I s={24}><path d="M0 0H24V24H0Z" fill="#1373b6" /><path d="M5.500 7Q10 7 12 11Q14 7 18.500 7L17 12L18 16L14.500 17L12 13L9.500 17L6 16L7 12Z" fill="#2f8a4a" /><path d="M7 8.500L11 12M17 8.500L13 12" stroke="#d5552c" strokeWidth="1.200" /><path d="M12 9V16" stroke="#222" /></I>
        <I w={22} h={18} ml={26}><path d="M5 7Q8 1 14 0L12 3Q18 4 19 10L21 15L14 14L8 18Q11 13 8 10Z" fill="#4f88bd" /><path d="M5 7Q10 5 13 8L12 13L7 17Q11 12 8 9Z" fill="#f2f2f2" /><path d="M0 9L7 7L8 10Z" fill="#2b2b2b" /><path d="M13 6Q17 10 11 15" stroke="#1e2a3a" strokeWidth="1.500" /></I>
        <I w={4} ml={27}>{handle}</I>
      </Task>
      <Task $w={122}>
        <Text ml={2} w={14} color="#fff">FR</Text>
        <I w={12} h={8} ml={16}><path d="M.8 7L6 1.500L11.200 7" stroke="#fff" strokeWidth="1.400" /></I>
        <I ml={10} s={16}><path d="M.6 5.500H3L7 1.500V14.500L3 10.500H.6Z" stroke="#fff" /><path d="M9 5.500Q10.500 8 9 10.500" stroke="#fff" /><path d="M11 3.500Q14 8 11 12.500M13 1.500Q17 8 13 14.500" stroke="#999" /></I>
        <I ml={8} w={17} h={14}><path d="M5 5H15.500V12H3V9" stroke="#fff" strokeWidth="1.200" /><path d="M6.500 6.500H14V10.500H6.500ZM0 3H5.500V6L4 8H1.500L0 6Z" fill="#fff" /><path d="M1.500 3V1M4 3V1" stroke="#fff" /></I>
        <I ml={11} s={16}><path d="M5 12L11 1.500L14 3L8 13L5 14ZM5 9C-1 9-1 15 4 15C12 15 9 8 16 8" stroke="#fff" strokeWidth="1.200" /></I>
      </Task>
      <Clock><Text w={26} color="#fff">18:42</Text><Text w={58} color="#fff">22/11/2020</Text></Clock>
      <Task $w={47} $ml={19}>
        <I s={16}><path d="M.7 1.500H15.300V12.500H10L7.500 15V12.500H.7Z" stroke="#fff" strokeWidth="1.300" /></I>
        <I w={2} h={40} ml={20}><path d="M.5 0V40" stroke="#8a8682" /></I>
      </Task>
    </Taskbar>
  );
}

export default function App() {
  return (
    <Screen>
      <Global />
      <TopHeader />
      <RibbonBar />
      <Workspace>
        <Contents />
        <MapArea />
        <Dock>
          {DOCK.map(([t, h, w]) => <DockTab key={t} $h={h}><Text vertical w={w || h} size={11.6}>{t}</Text></DockTab>)}
        </Dock>
      </Workspace>
      <WinBar />
      <Popup />
    </Screen>
  );
}
